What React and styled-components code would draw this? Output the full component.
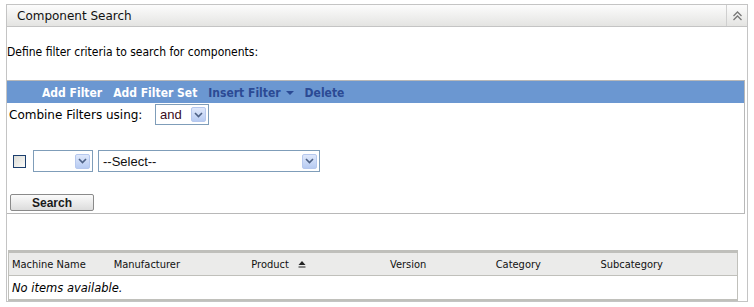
import React from "react";
import styled, { createGlobalStyle } from "styled-components";

const Global = createGlobalStyle`
  body {
    margin: 0;
    background: #ffffff;
    font-family: "DejaVu Sans", Verdana, sans-serif;
    color: #000;
  }
`;

const Page = styled.div`
  padding: 4px 6px 0 6px;
`;

const Panel = styled.div`
  width: 740px;
  height: 296px;
  border: 1px solid #c4c4c4;
  display: flex;
  flex-direction: column;
  & > * {
    flex-shrink: 0;
  }
`;

const Header = styled.div`
  height: 21px;
  display: flex;
  align-items: stretch;
  background: linear-gradient(#fcfcfc, #e4e4e2);
  border-bottom: 1px solid #c4c4c4;
`;

const Title = styled.div`
  flex: 1;
  display: flex;
  align-items: center;
  padding-left: 10px;
  font-size: 12px;
  color: #111;
`;

const Collapse = styled.div`
  width: 20px;
  border-left: 1px solid #cfcfcf;
  display: flex;
  align-items: center;
  justify-content: center;
`;

const Intro = styled.div`
  margin: 18px 0 0 0;
  font-family: "DejaVu Sans Condensed", "DejaVu Sans", sans-serif;
  font-size: 12px;
  line-height: 14px;
  height: 14px;
`;

const FilterBox = styled.div`
  margin: 21px 2px 0 0;
  border: 1px solid #b8b8b8;
  border-left: none;
  height: 132px;
  display: flex;
  flex-direction: column;
`;

const ActionBar = styled.div`
  height: 22px;
  background: #6b97d1;
  display: flex;
  align-items: center;
  padding: 1px 0 0 35px;
  box-sizing: border-box;
  gap: 11px;
`;

const Action = styled.span`
  font-size: 12px;
  font-weight: bold;
  color: ${(p) => (p.$dim ? "#2b4a94" : "#ffffff")};
  display: inline-flex;
  align-items: center;
  gap: 5px;
  font-family: "DejaVu Sans Condensed", "DejaVu Sans", sans-serif;
`;

const Caret = styled.span`
  width: 0;
  height: 0;
  border-left: 4px solid transparent;
  border-right: 4px solid transparent;
  border-top: 4px solid #2b4a94;
`;

const CombineRow = styled.div`
  display: flex;
  align-items: center;
  height: 21px;
  margin-top: 1px;
  padding-left: 2px;
  font-size: 12px;
`;

const CombineLabel = styled.span`
  width: 146px;
`;

const SelectBox = styled.div`
  width: ${(p) => p.$w}px;
  height: ${(p) => p.$h}px;
  box-sizing: border-box;
  border: 1px solid #7f9db9;
  background: #fff;
  display: flex;
  align-items: center;
  justify-content: space-between;
  padding: 0 2px 0 4px;
  font-family: "Liberation Sans", Arial, sans-serif;
  font-size: 13px;
  color: ${(p) => (p.$dark ? "#111" : "#3a0a20")};
`;

const Arrow = styled.span`
  width: 15px;
  height: 15px;
  box-sizing: border-box;
  border: 1px solid #b6c8ee;
  border-radius: 2px;
  background: linear-gradient(#dfe8fb, #b7cbf2);
  display: flex;
  align-items: center;
  justify-content: center;
`;

const FilterRow = styled.div`
  display: flex;
  align-items: center;
  gap: 5px;
  margin-top: 25px;
  padding-left: 6px;
`;

const Check = styled.span`
  width: 13px;
  height: 13px;
  box-sizing: border-box;
  border: 1px solid #1c3f6e;
  background: linear-gradient(135deg, #dcdcd6, #fbfbf9);
  margin-right: 2px;
`;

const SearchButton = styled.button`
  margin: 22px 0 0 3px;
  width: 84px;
  height: 17px;
  padding: 0;
  border: 1px solid #8a8a8a;
  border-radius: 2px;
  background: linear-gradient(#fbfbfb, #dcdcdc);
  font-family: "Liberation Sans", Arial, sans-serif;
  font-size: 12px;
  font-weight: bold;
  color: #1a1a1a;
`;

const Table = styled.div`
  margin: 36px 9px 0 1px;
  border: 1px solid #c0c0bb;
  border-top: 3px solid #bfbfbb;
  border-bottom: 2px solid #c0c0bb;
`;

const HeadRow = styled.div`
  height: 22px;
  background: #ebebea;
  border-bottom: 1px solid #c0c0bb;
  display: flex;
  align-items: center;
  font-size: 11px;
  color: #111;
  font-family: "DejaVu Sans Condensed", "DejaVu Sans", sans-serif;
`;

const Col = styled.div`
  width: ${(p) => p.$w}px;
  padding-left: 3px;
  box-sizing: border-box;
  display: flex;
  align-items: center;
  gap: 9px;
`;

const Empty = styled.div`
  height: 23px;
  display: flex;
  align-items: center;
  padding-left: 3px;
  font-style: italic;
  font-size: 11.5px;
`;

const Down = () => (
  <svg width="9" height="6" viewBox="0 0 9 6">
    <path d="M1 1 L4.5 4.5 L8 1" fill="none" stroke="#4d6185" strokeWidth="1.6" />
  </svg>
);

const columns = [
  ["Machine Name", 102],
  ["Manufacturer", 138],
  ["Product", 139],
  ["Version", 106],
  ["Category", 105],
  ["Subcategory", 140],
];

export default function App() {
  return (
    <>
      <Global />
      <Page>
        <Panel>
          <Header>
            <Title>Component Search</Title>
            <Collapse>
              <svg width="11" height="10" viewBox="0 0 11 10">
                <path d="M1.5 5 L5.5 1 L9.5 5 M1.5 9 L5.5 5 L9.5 9" fill="none" stroke="#777" strokeWidth="1.3" />
              </svg>
            </Collapse>
          </Header>
          <Intro>Define filter criteria to search for components:</Intro>
          <FilterBox>
            <ActionBar>
              <Action>Add Filter</Action>
              <Action>Add Filter Set</Action>
              <Action $dim>
                Insert Filter <Caret />
              </Action>
              <Action $dim>Delete</Action>
            </ActionBar>
            <CombineRow>
              <CombineLabel>Combine Filters using:</CombineLabel>
              <SelectBox $w={54} $h={21}>
                and
                <Arrow>
                  <Down />
                </Arrow>
              </SelectBox>
            </CombineRow>
            <FilterRow>
              <Check />
              <SelectBox $w={60} $h={22}>
                <span />
                <Arrow>
                  <Down />
                </Arrow>
              </SelectBox>
              <SelectBox $w={222} $h={22} $dark>
                --Select--
                <Arrow>
                  <Down />
                </Arrow>
              </SelectBox>
            </FilterRow>
            <div>
              <SearchButton>Search</SearchButton>
            </div>
          </FilterBox>
          <Table>
            <HeadRow>
              {columns.map(([name, w]) => (
                <Col key={name} $w={w}>
                  {name}
                  {name === "Product" && (
                    <svg width="8" height="8" viewBox="0 0 8 8">
                      <path d="M0.5 5 L4 1 L7.5 5 Z" fill="#222" />
                      <rect x="0.5" y="6.5" width="7" height="1" fill="#222" />
                    </svg>
                  )}
                </Col>
              ))}
            </HeadRow>
            <Empty>No items available.</Empty>
          </Table>
        </Panel>
      </Page>
    </>
  );
}
